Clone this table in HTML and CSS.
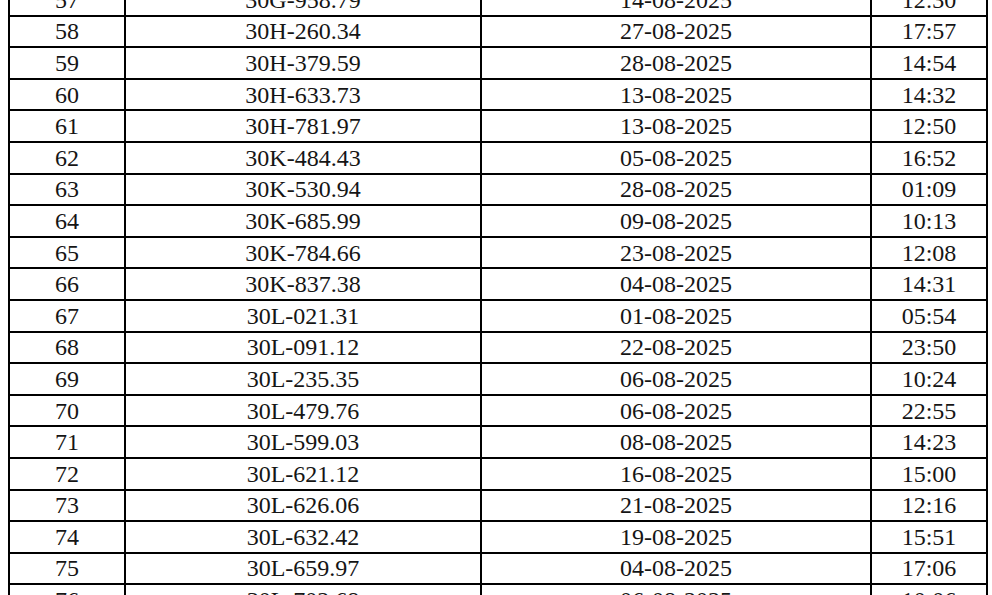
FILE: index.html
```html
<!DOCTYPE html>
<html lang="vi">
<head>
<meta charset="utf-8">
<title>Danh sách</title>
<link rel="stylesheet" href="styles.css">
</head>
<body>
<div class="sheet">
<table class="list">
<colgroup>
<col class="c-no"><col class="c-plate"><col class="c-date"><col class="c-time">
</colgroup>
<tbody>
<tr><td>57</td><td>30G-958.79</td><td>14-08-2025</td><td>12:30</td></tr>
<tr><td>58</td><td>30H-260.34</td><td>27-08-2025</td><td>17:57</td></tr>
<tr><td>59</td><td>30H-379.59</td><td>28-08-2025</td><td>14:54</td></tr>
<tr><td>60</td><td>30H-633.73</td><td>13-08-2025</td><td>14:32</td></tr>
<tr><td>61</td><td>30H-781.97</td><td>13-08-2025</td><td>12:50</td></tr>
<tr><td>62</td><td>30K-484.43</td><td>05-08-2025</td><td>16:52</td></tr>
<tr><td>63</td><td>30K-530.94</td><td>28-08-2025</td><td>01:09</td></tr>
<tr><td>64</td><td>30K-685.99</td><td>09-08-2025</td><td>10:13</td></tr>
<tr><td>65</td><td>30K-784.66</td><td>23-08-2025</td><td>12:08</td></tr>
<tr><td>66</td><td>30K-837.38</td><td>04-08-2025</td><td>14:31</td></tr>
<tr><td>67</td><td>30L-021.31</td><td>01-08-2025</td><td>05:54</td></tr>
<tr><td>68</td><td>30L-091.12</td><td>22-08-2025</td><td>23:50</td></tr>
<tr><td>69</td><td>30L-235.35</td><td>06-08-2025</td><td>10:24</td></tr>
<tr><td>70</td><td>30L-479.76</td><td>06-08-2025</td><td>22:55</td></tr>
<tr><td>71</td><td>30L-599.03</td><td>08-08-2025</td><td>14:23</td></tr>
<tr><td>72</td><td>30L-621.12</td><td>16-08-2025</td><td>15:00</td></tr>
<tr><td>73</td><td>30L-626.06</td><td>21-08-2025</td><td>12:16</td></tr>
<tr><td>74</td><td>30L-632.42</td><td>19-08-2025</td><td>15:51</td></tr>
<tr><td>75</td><td>30L-659.97</td><td>04-08-2025</td><td>17:06</td></tr>
<tr><td>76</td><td>30L-702.68</td><td>06-08-2025</td><td>10:06</td></tr>
</tbody>
</table>
</div>
</body>
</html>
```
FILE: styles.css
```css
html, body {
  margin: 0;
  padding: 0;
  background: #fff;
  overflow: hidden;
}
.sheet {
  padding-left: 8px;
  margin-top: -17px;
}
.list {
  border-collapse: collapse;
  table-layout: fixed;
  width: 980px;
  border: 2px solid #000;
  font-family: "Liberation Serif", "Times New Roman", serif;
  font-size: 24px;
  color: #151515;
}
.c-no { width: 116px; }
.c-plate { width: 356px; }
.c-date { width: 390px; }
.c-time { width: 116px; }
.list tr { height: 31.6px; }
.list td {
  border: 2px solid #000;
  padding: 0;
  line-height: 1;
  text-align: center;
  vertical-align: middle;
}
```
